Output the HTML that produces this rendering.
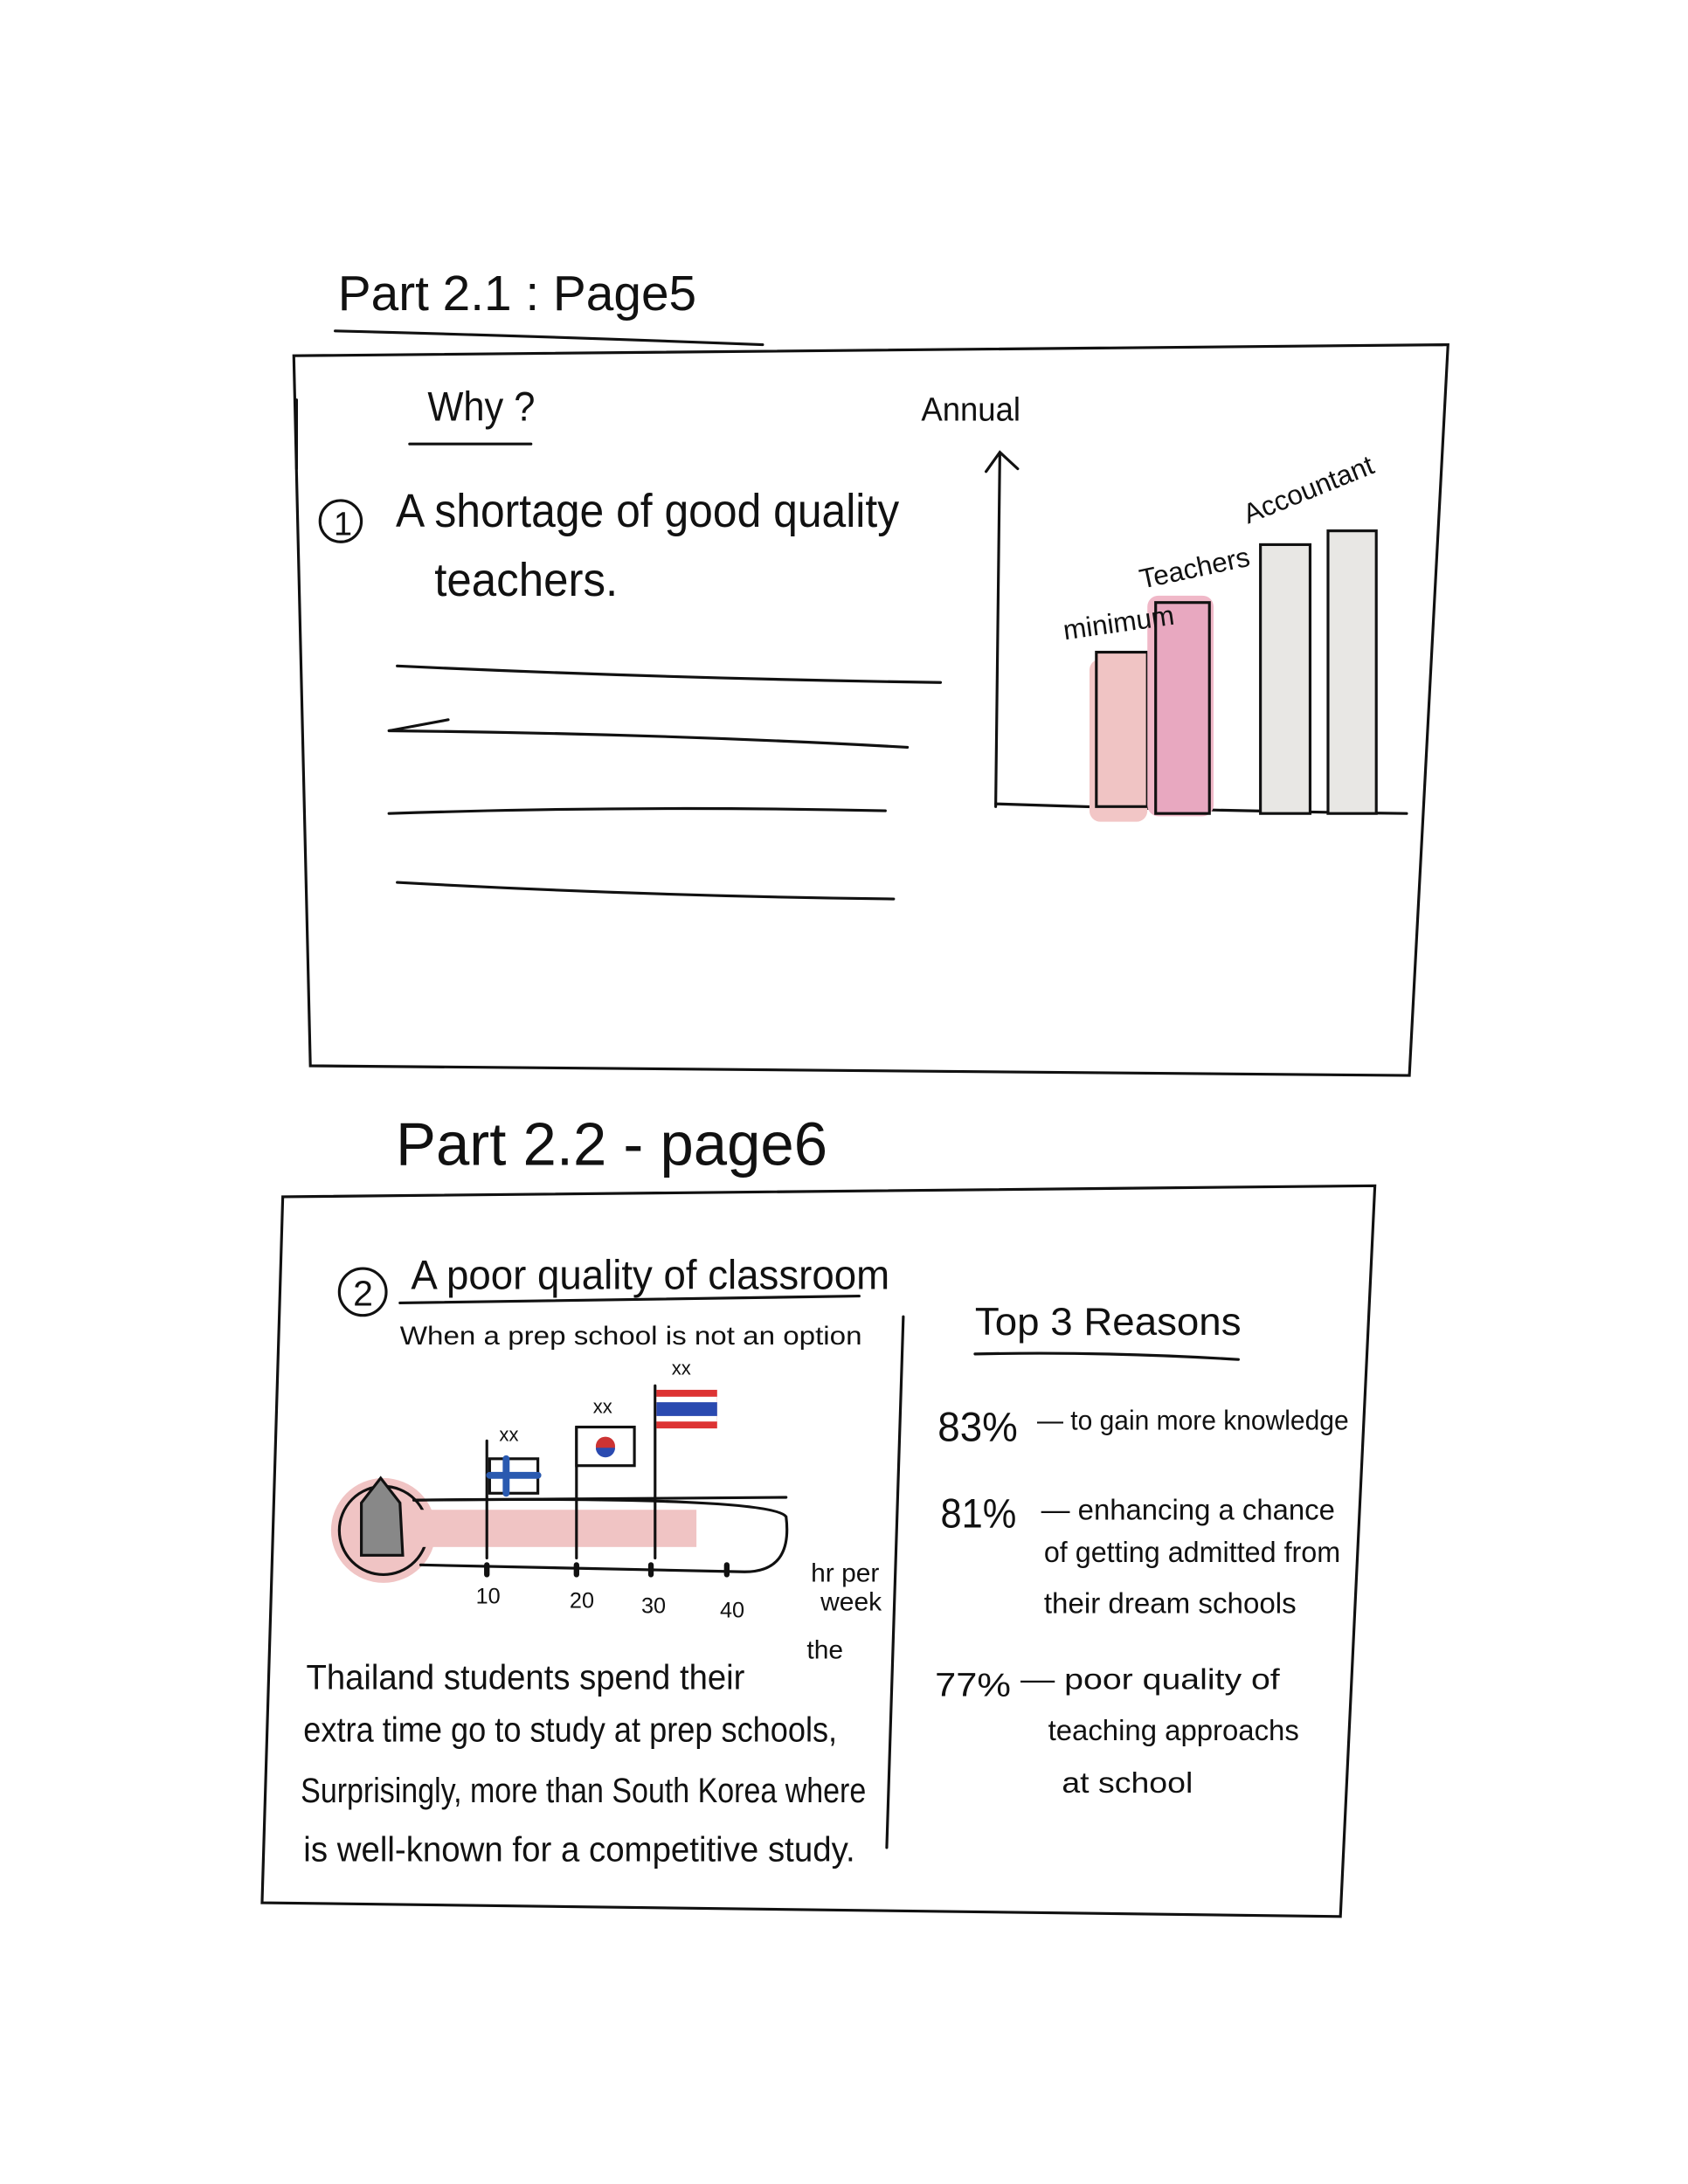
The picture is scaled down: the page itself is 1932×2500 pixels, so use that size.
<!DOCTYPE html>
<html><head><meta charset="utf-8"><style>
html,body{margin:0;padding:0;background:#fff;}
svg{display:block;}
text{font-family:"Liberation Sans",sans-serif;fill:#111;}
</style></head><body>
<svg width="1932" height="2500" viewBox="0 0 1224 1584" xmlns="http://www.w3.org/2000/svg" fill="none" stroke="#111" stroke-width="2" stroke-linecap="round">
<rect x="0" y="0" width="1224" height="1584" fill="#fff" stroke="none"/>
<g stroke="none">
<text x="245" y="225" font-size="36" textLength="260" lengthAdjust="spacingAndGlyphs">Part 2.1 : Page5</text>
<text x="310" y="305" font-size="30" textLength="78" lengthAdjust="spacingAndGlyphs">Why ?</text>
<text x="242" y="388" font-size="24">1</text>
<text x="287" y="382" font-size="34" textLength="365" lengthAdjust="spacingAndGlyphs">A shortage of good quality</text>
<text x="315" y="432" font-size="34" textLength="133" lengthAdjust="spacingAndGlyphs">teachers.</text>
<text x="668" y="305" font-size="24" textLength="72" lengthAdjust="spacingAndGlyphs">Annual</text>
<text x="287" y="845" font-size="44" textLength="313" lengthAdjust="spacingAndGlyphs">Part 2.2 - page6</text>
<text x="256" y="947" font-size="26">2</text>
<text x="298" y="935" font-size="30" textLength="347" lengthAdjust="spacingAndGlyphs">A poor quality of classroom</text>
<text x="290" y="975" font-size="19" textLength="335" lengthAdjust="spacingAndGlyphs">When a prep school is not an option</text>
<text x="222" y="1225" font-size="25" textLength="318" lengthAdjust="spacingAndGlyphs">Thailand students spend their</text>
<text x="220" y="1263" font-size="25" textLength="387" lengthAdjust="spacingAndGlyphs">extra time go to study at prep schools,</text>
<text x="218" y="1307" font-size="25" textLength="410" lengthAdjust="spacingAndGlyphs">Surprisingly, more than South Korea where</text>
<text x="220" y="1350" font-size="25" textLength="400" lengthAdjust="spacingAndGlyphs">is well-known for a competitive study.</text>
<text x="707" y="968" font-size="28" textLength="193" lengthAdjust="spacingAndGlyphs">Top 3  Reasons</text>
<text x="680" y="1045" font-size="30" textLength="58" lengthAdjust="spacingAndGlyphs">83%</text>
<text x="752" y="1037" font-size="20" textLength="226" lengthAdjust="spacingAndGlyphs">— to gain more knowledge</text>
<text x="682" y="1108" font-size="30" textLength="55" lengthAdjust="spacingAndGlyphs">81%</text>
<text x="755" y="1102" font-size="21" textLength="213" lengthAdjust="spacingAndGlyphs">— enhancing a chance</text>
<text x="757" y="1133" font-size="21" textLength="215" lengthAdjust="spacingAndGlyphs">of getting admitted from</text>
<text x="757" y="1170" font-size="21" textLength="183" lengthAdjust="spacingAndGlyphs">their dream schools</text>
<text x="678" y="1230" font-size="24" textLength="55" lengthAdjust="spacingAndGlyphs">77%</text>
<text x="740" y="1225" font-size="21" textLength="188" lengthAdjust="spacingAndGlyphs">— poor quality of</text>
<text x="760" y="1262" font-size="21" textLength="182" lengthAdjust="spacingAndGlyphs">teaching approachs</text>
<text x="770" y="1300" font-size="21" textLength="95" lengthAdjust="spacingAndGlyphs">at school</text>
<text x="362" y="1045" font-size="14">xx</text>
<text x="430" y="1025" font-size="14">xx</text>
<text x="487" y="997" font-size="14">xx</text>
<text x="345" y="1163" font-size="16">10</text>
<text x="413" y="1166" font-size="16">20</text>
<text x="465" y="1170" font-size="16">30</text>
<text x="522" y="1173" font-size="16">40</text>
<text x="588" y="1147" font-size="19">hr per</text>
<text x="595" y="1168" font-size="19">week</text>
<text x="585" y="1203" font-size="19">the</text>
</g>
<path d="M243 240 Q400 244 553 250"/>
<path d="M213 258 L1050 250 L1022 780 L225 773 Z"/>
<path d="M215 290 L215 340"/>
<path d="M297 322 L385 322"/>
<circle cx="247" cy="378" r="15"/>
<path d="M288 483 Q480 492 682 495"/>
<path d="M282 530 Q480 532 658 542 M282 530 L325 522"/>
<path d="M282 590 Q460 584 642 588"/>
<path d="M288 640 Q470 650 648 652"/>
<path d="M725 330 L722 585 M715 342 L725 328 L738 340"/>
<path d="M722 583 Q870 588 1020 590"/>
<rect x="790" y="478" width="42" height="118" fill="#f2c6c6" stroke="none" rx="8"/>
<rect x="795" y="473" width="37" height="112" fill="#f0c4c4"/>
<rect x="832" y="432" width="48" height="160" fill="#f0b8c8" stroke="none" rx="8"/>
<rect x="838" y="437" width="39" height="153" fill="#e8a8c0"/>
<rect x="914" y="395" width="36" height="195" fill="#e8e7e4"/>
<rect x="963" y="385" width="35" height="205" fill="#e8e7e4"/>
<g stroke="none">
<text x="772" y="464" font-size="20" transform="rotate(-8 772 464)">minimum</text>
<text x="828" y="427" font-size="20" transform="rotate(-12 828 427)">Teachers</text>
<text x="905" y="380" font-size="20" transform="rotate(-22 905 380)">Accountant</text>
</g>
<path d="M205 868 L997 860 L972 1390 L190 1380 Z"/>
<circle cx="263" cy="937" r="17"/>
<path d="M290 945 Q460 942 623 940"/>
<path d="M655 955 L643 1340"/>
<circle cx="278" cy="1110" r="38" fill="#f0c4c4" stroke="none"/>
<path d="M300 1088 Q560 1085 570 1100 Q575 1140 540 1140 L305 1135"/>
<circle cx="278" cy="1110" r="32"/>
<rect x="300" y="1095" width="205" height="27" fill="#f0c4c4" stroke="none"/>
<path d="M262 1090 L276 1072 L290 1090 L292 1128 L262 1128 Z" fill="#888"/>
<path d="M300 1088 L570 1086"/>
<path d="M353 1130 L353 1045 M418 1130 L418 1035 M475 1130 L475 1005"/>
<rect x="355" y="1058" width="35" height="25" fill="#fff"/>
<path d="M355 1070 L390 1070 M367 1058 L367 1083" stroke="#2a5ab0" stroke-width="5"/>
<rect x="418" y="1035" width="42" height="28" fill="#fff"/>
<circle cx="439" cy="1049" r="7" fill="#c33" stroke="none"/>
<path d="M432 1050 A7 7 0 0 0 446 1050 Z" fill="#2a4ab0" stroke="none"/>
<rect x="476" y="1008" width="44" height="28" fill="#d33" stroke="none"/>
<rect x="476" y="1013" width="44" height="18" fill="#fff" stroke="none"/>
<rect x="476" y="1017" width="44" height="10" fill="#2a4ab0" stroke="none"/>
<path d="M353 1135 L353 1142 M418 1135 L418 1142 M472 1135 L472 1142 M527 1135 L527 1142" stroke-width="4"/>
<path d="M707 982 Q800 980 898 986"/>
</svg>
</body></html>
